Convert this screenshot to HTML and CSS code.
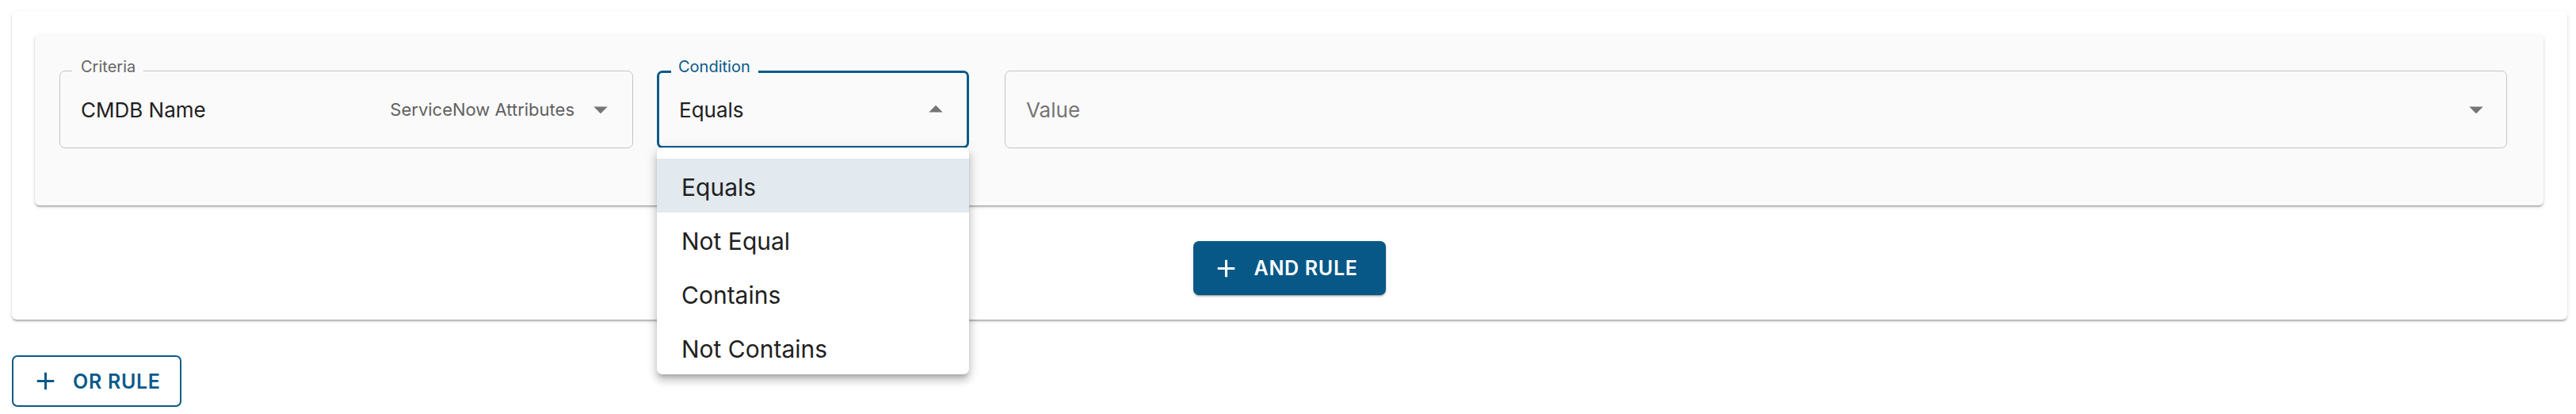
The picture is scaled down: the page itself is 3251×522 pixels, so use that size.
FILE: index.html
```html
<!DOCTYPE html>
<html lang="en">
<head>
<meta charset="utf-8">
<title>Rule builder</title>
<link rel="stylesheet" href="styles.css">
</head>
<body>
<div class="page">
  <section class="rule-group">
    <div class="rule-row">
      <div class="field field-criteria">
        <span class="field-label">Criteria</span>
        <span class="field-value">CMDB Name</span>
        <span class="field-adorn">ServiceNow Attributes</span>
        <svg class="arrow" viewBox="0 0 24 24"><path d="M7 10l5 5 5-5z"/></svg>
      </div>
      <div class="field field-condition is-focused">
        <span class="field-label">Condition</span>
        <span class="field-value">Equals</span>
        <svg class="arrow" viewBox="0 0 24 24"><path d="M7 14l5-5 5 5z"/></svg>
        <ul class="menu">
          <li class="menu-item is-selected">Equals</li>
          <li class="menu-item">Not Equal</li>
          <li class="menu-item">Contains</li>
          <li class="menu-item">Not Contains</li>
        </ul>
      </div>
      <div class="field field-value-select">
        <span class="field-placeholder">Value</span>
        <svg class="arrow" viewBox="0 0 24 24"><path d="M7 10l5 5 5-5z"/></svg>
      </div>
    </div>
    <div class="and-row">
      <button class="btn btn-contained">
        <svg class="btn-icon" viewBox="0 0 24 24"><path d="M19 13h-6v6h-2v-6H5v-2h6V5h2v6h6v2z"/></svg>
        <span>AND RULE</span>
      </button>
    </div>
  </section>
  <div class="or-row">
    <button class="btn btn-outlined">
      <svg class="btn-icon" viewBox="0 0 24 24"><path d="M19 13h-6v6h-2v-6H5v-2h6V5h2v6h6v2z"/></svg>
      <span>OR RULE</span>
    </button>
  </div>
</div>
</body>
</html>
```
FILE: styles.css
```css
* { box-sizing: border-box; }

html, body {
  margin: 0;
  padding: 0;
  background: #ffffff;
  font-family: Inter, "Noto Sans", sans-serif;
  color: #212121;
}

.page {
  padding: 14px 11px 0 15px;
}

.rule-group {
  background: #ffffff;
  border-radius: 6px;
  padding: 29px 30px 31px 29px;
  box-shadow: 0 3px 2px -2px rgba(0,0,0,0.2), 0 2px 2px 0 rgba(0,0,0,0.14), 0 2px 5px 0 rgba(0,0,0,0.12);
}

.rule-row {
  display: flex;
  align-items: flex-start;
  background: #fafafa;
  border-radius: 6px;
  padding: 46px 46px 72px 31px;
  box-shadow: 0 3px 2px -2px rgba(0,0,0,0.2), 0 2px 2px 0 rgba(0,0,0,0.14), 0 2px 5px 0 rgba(0,0,0,0.12);
}

.field {
  position: relative;
  display: flex;
  align-items: center;
  height: 98px;
  border: 1px solid #c4c4c4;
  border-radius: 7px;
  padding: 0 19px 0 26px;
}

.field-criteria { width: 724px; }
.field-condition {
  width: 394px;
  margin-left: 30px;
  border: 3px solid #0a5a89;
  padding: 0 18px 0 25px;
}
.field-value-select {
  flex: 1;
  margin-left: 45px;
  padding-right: 17px;
}

.field-label {
  position: absolute;
  top: -18px;
  left: 15px;
  padding: 0 10px 0 11px;
  background: #fafafa;
  font-size: 20px;
  line-height: 24px;
  color: #666666;
}
.field-condition .field-label {
  top: -20px;
  left: 15px;
  padding: 0 10px 0 9px;
  color: #0a5a89;
}

.field-value {
  font-size: 26px;
  flex: 1;
  white-space: nowrap;
}

.field-adorn {
  font-size: 22px;
  color: #616161;
  margin-right: 12px;
  white-space: nowrap;
}

.field-placeholder {
  flex: 1;
  font-size: 26px;
  color: #757575;
}

.arrow {
  width: 42px;
  height: 42px;
  fill: #757575;
  flex: none;
}

.menu {
  position: absolute;
  top: calc(100% + 2px);
  left: -3px;
  width: 394px;
  margin: 0;
  padding: 14px 0 0;
  list-style: none;
  background: #ffffff;
  border-radius: 7px;
  z-index: 5;
  box-shadow: 0 5px 5px -3px rgba(0,0,0,0.2), 0 8px 10px 1px rgba(0,0,0,0.14), 0 3px 14px 2px rgba(0,0,0,0.12);
  overflow: hidden;
}

.menu-item {
  height: 68px;
  display: flex;
  align-items: center;
  padding: 3px 0 0 31px;
  font-size: 30px;
  color: #212121;
}

.menu-item.is-selected {
  background: #e2e9ef;
}

.and-row {
  display: flex;
  justify-content: center;
  padding-top: 45px;
}

.btn {
  display: flex;
  align-items: center;
  font-family: Inter, "Noto Sans", sans-serif;
  font-size: 25px;
  font-weight: 600;
  letter-spacing: 0.7px;
  border-radius: 7px;
  cursor: pointer;
  margin: 0;
}

.btn-icon {
  width: 37px;
  height: 37px;
  flex: none;
  margin-right: 17px;
}

.btn-contained {
  width: 243px;
  height: 68px;
  padding: 0 0 0 23px;
  background: #075887;
  color: #ffffff;
  border: none;
  box-shadow: 0 3px 1px -2px rgba(0,0,0,0.2), 0 2px 2px 0 rgba(0,0,0,0.14), 0 1px 5px 0 rgba(0,0,0,0.12);
}
.btn-contained .btn-icon { fill: #ffffff; }

.or-row {
  padding-top: 45px;
  display: flex;
}

.btn-outlined {
  width: 214px;
  height: 65px;
  padding: 0 0 0 22px;
  background: #ffffff;
  color: #0a5a89;
  border: 2px solid #0a5a89;
}
.btn-outlined .btn-icon { fill: #0a5a89; margin-right: 16px; }
```
